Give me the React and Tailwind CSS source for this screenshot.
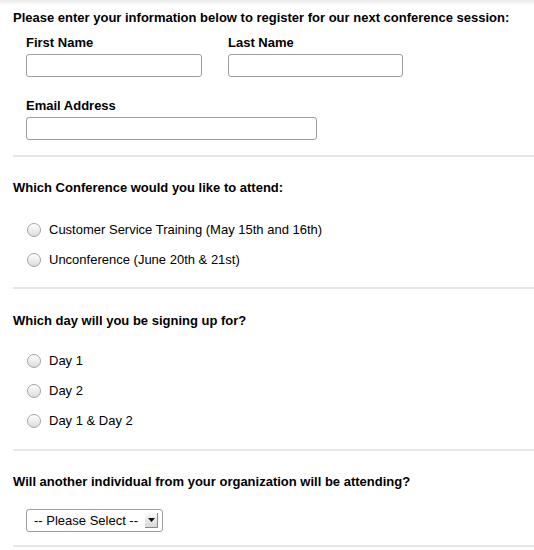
const Radio = ({ label }) => (
    <label className="flex items-center h-[15px] leading-[15px]">
        <span className="ml-[14px] w-[14px] h-[14px] rounded-full border border-[#a3a3a3] bg-gradient-to-b from-white to-[#dcdcdc] shadow-[inset_0_1px_1px_rgba(255,255,255,0.9)]" />
        <span className="ml-[8px]">{label}</span>
    </label>
);

const Divider = ({ className }) => (
    <div className={"h-[2px] bg-[#e6e6e6] " + className} />
);

const App = () => {
    return (
        <div className="min-h-[550px] bg-white text-[13px] text-black font-['Liberation_Sans',Arial,sans-serif]">
            <div className="h-[5px] bg-gradient-to-b from-[#e9e9e9] to-white" />
            <div className="pl-[13px]">
                <h2 className="mt-[5px] font-bold leading-[15px]">
                    Please enter your information below to register for our next conference session:
                </h2>
                <div className="pl-[13px]">
                    <div className="flex mt-[10px]">
                        <div className="w-[202px]">
                            <div className="font-bold leading-[15px]">First Name</div>
                            <input className="mt-[4px] w-[176px] h-[23px] border border-[#9d9d9d] rounded-[3px] bg-white" />
                        </div>
                        <div>
                            <div className="font-bold leading-[15px]">Last Name</div>
                            <input className="mt-[4px] w-[175px] h-[23px] border border-[#9d9d9d] rounded-[3px] bg-white" />
                        </div>
                    </div>
                    <div className="mt-[21px] font-bold leading-[15px]">Email Address</div>
                    <input className="mt-[4px] w-[291px] h-[23px] border border-[#9d9d9d] rounded-[3px] bg-white block" />
                </div>

                <Divider className="mt-[15px]" />
                <h2 className="mt-[23px] font-bold leading-[15px]">Which Conference would you like to attend:</h2>
                <div className="mt-[27px] flex flex-col gap-[15px]">
                    <Radio label="Customer Service Training (May 15th and 16th)" />
                    <Radio label="Unconference (June 20th & 21st)" />
                </div>

                <Divider className="mt-[20px]" />
                <h2 className="mt-[24px] font-bold leading-[15px]">Which day will you be signing up for?</h2>
                <div className="mt-[25px] flex flex-col gap-[15px]">
                    <Radio label="Day 1" />
                    <Radio label="Day 2" />
                    <Radio label="Day 1 & Day 2" />
                </div>

                <Divider className="mt-[21px]" />
                <h2 className="mt-[23px] font-bold leading-[15px]">
                    Will another individual from your organization will be attending?
                </h2>
                <div className="mt-[20px] ml-[13px] w-[137px] h-[23px] border border-[#9d9d9d] rounded-[3px] bg-white flex items-center pl-[7px] pr-[4px]">
                    <span className="flex-1 leading-[15px]">-- Please Select --</span>
                    <span className="w-[13px] h-[15px] bg-gradient-to-b from-[#fafafa] to-[#d8d8d8] border-r border-b border-[#8a8a8a] flex items-center justify-center">
                        <svg width="7" height="4" viewBox="0 0 7 4">
                            <path d="M0 0h7L3.5 4z" fill="#111" />
                        </svg>
                    </span>
                </div>
                <Divider className="mt-[13px]" />
            </div>
        </div>
    );
};

export default App;
